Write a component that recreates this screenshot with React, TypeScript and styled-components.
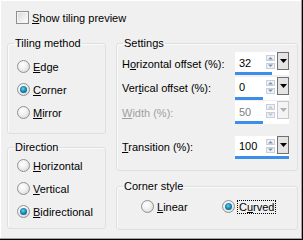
import React from "react";
import styled, { createGlobalStyle } from "styled-components";

const GlobalStyle = createGlobalStyle`
  html, body { margin: 0; padding: 0; background: #f0f0f0; }
  body { font-family: "Liberation Sans", Arial, sans-serif; font-size: 11px; color: #000; }
`;

const Dialog = styled.div`
  width: 303px;
  height: 240px;
  box-sizing: border-box;
  background: #f0f0f0;
  padding: 11px 5px 0 7px;
  box-shadow: inset -1px -1px 0 #000, inset -2px -2px 0 #a0a0a0, inset 1px 1px 0 #fff;
  display: flex;
  flex-direction: column;
`;

const Header = styled.div`
  padding-left: 9px;
  height: 13px;
  display: flex;
  align-items: center;
`;

const Columns = styled.div`
  margin-top: 13px;
  display: grid;
  grid-template-columns: 99px 1fr;
  column-gap: 10px;
  align-items: start;
`;

const Column = styled.div<{ $gap: number }>`
  display: flex;
  flex-direction: column;
  gap: ${(p) => p.$gap}px;
`;

const Group = styled.fieldset<{ $h: number; $pt: number }>`
  margin: 0;
  box-sizing: border-box;
  height: ${(p) => p.$h}px;
  padding: ${(p) => p.$pt}px 0 0 0;
  border: 1px solid #dde0e3;
  border-radius: 3px;
  box-shadow: inset 1px 1px 0 #fbfbfb;
  min-width: 0;
  overflow: hidden;
`;

const Legend = styled.legend`
  margin-left: 6px;
  padding: 0 1px;
  font-size: 11px;
  line-height: 13px;
`;

const Key = styled.span`
  text-decoration: underline;
  text-underline-offset: 1px;
`;

const Label = styled.span<{ $disabled?: boolean; $focus?: boolean }>`
  color: ${(p) => (p.$disabled ? "#a0a0a0" : "#000")};
  white-space: nowrap;
  ${(p) => (p.$focus ? "outline: 1px dotted #000; outline-offset: 0px; padding: 0 1px;" : "")}
`;

const RadioRow = styled.div`
  height: 23px;
  display: flex;
  align-items: center;
  gap: 3px;
  padding-left: 9px;
`;

const RadioCircle = styled.span<{ $checked?: boolean }>`
  width: 13px;
  height: 13px;
  box-sizing: border-box;
  border-radius: 50%;
  border: 1px solid #8f9293;
  background: radial-gradient(circle at 40% 35%, #ffffff 0%, #f2f2f2 40%, #d0d0d0 100%);
  display: flex;
  align-items: center;
  justify-content: center;
  flex-shrink: 0;
  &::after {
    content: "";
    display: ${(p) => (p.$checked ? "block" : "none")};
    width: 7px;
    height: 7px;
    border-radius: 50%;
    background: radial-gradient(circle at 45% 40%, #6fd0ec 0%, #1a8bb5 45%, #0b3f5a 100%);
  }
`;

const CheckBox = styled.span`
  width: 13px;
  height: 13px;
  box-sizing: border-box;
  border: 1px solid #8f8f8f;
  background: linear-gradient(135deg, #d8d8d8 0%, #f0f0f0 60%, #ffffff 100%);
  box-shadow: inset 0 0 0 1px #f4f4f4;
  margin-right: 3px;
`;

const SettingsRows = styled.div`
  display: flex;
  flex-direction: column;
  gap: 1.5px;
  padding: 0 8px 0 5px;
`;

const SettingRow = styled.div<{ $gap?: number }>`
  height: 23px;
  display: flex;
  align-items: center;
  justify-content: space-between;
  margin-top: ${(p) => p.$gap ?? 0}px;
`;

const Field = styled.div`
  position: relative;
  width: 54px;
  height: 23px;
  background: #fff;
  display: flex;
  align-items: center;
  box-sizing: border-box;
`;

const FieldValue = styled.span<{ $disabled?: boolean }>`
  flex: 1;
  padding-left: 4px;
  color: ${(p) => (p.$disabled ? "#808080" : "#000")};
  padding-bottom: 2px;
`;

const Spinner = styled.div`
  width: 9px;
  display: flex;
  flex-direction: column;
  gap: 2px;
  margin-right: 2px;
  padding-bottom: 3px;
`;

const SpinBtn = styled.svg`
  display: block;
`;

const DropBtn = styled.div<{ $disabled?: boolean }>`
  width: 12px;
  height: 18px;
  box-sizing: border-box;
  border: 1px solid ${(p) => (p.$disabled ? "#c8c8c8" : "#707070")};
  background: ${(p) => (p.$disabled ? "#f4f4f4" : "#e4e4e4")};
  display: flex;
  align-items: center;
  justify-content: center;
  align-self: flex-start;
`;

const Bar = styled.div`
  position: absolute;
  left: 0;
  bottom: 0;
  height: 3px;
  background: #3c8ee6;
`;

const CornerRow = styled.div`
  display: flex;
  align-items: center;
  padding-left: 24px;
`;

const CornerItem = styled.div<{ $w: number }>`
  width: ${(p) => p.$w}px;
  display: flex;
  align-items: center;
  gap: 3px;
  height: 23px;
`;

function Radio({ checked, children }: { checked?: boolean; children: React.ReactNode }) {
  return (
    <RadioRow>
      <RadioCircle $checked={checked} />
      <Label>{children}</Label>
    </RadioRow>
  );
}

function Spin({ value, bar, disabled }: { value: string; bar: number; disabled?: boolean }) {
  const arrow = disabled ? "#c0c0c0" : "#7a8ea8";
  return (
    <Field>
      <FieldValue $disabled={disabled}>{value}</FieldValue>
      <Spinner>
        <SpinBtn width="9" height="6" viewBox="0 0 9 6">
          <rect x="0.5" y="0.5" width="8" height="5" fill="#eef2f6" stroke="#c6d0da" />
          <path d="M2 4.5 L4.5 2 L7 4.5 Z" fill={arrow} />
        </SpinBtn>
        <SpinBtn width="9" height="6" viewBox="0 0 9 6">
          <rect x="0.5" y="0.5" width="8" height="5" fill="#eef2f6" stroke="#c6d0da" />
          <path d="M2 1.5 L4.5 4 L7 1.5 Z" fill={arrow} />
        </SpinBtn>
      </Spinner>
      <DropBtn $disabled={disabled}>
        <svg width="7" height="4" viewBox="0 0 7 4">
          <path d="M0 0 L7 0 L3.5 4 Z" fill={disabled ? "#b0b0b0" : "#000"} />
        </svg>
      </DropBtn>
      <Bar style={{ width: bar }} />
    </Field>
  );
}

export default function App() {
  return (
    <>
      <GlobalStyle />
      <Dialog>
        <Header>
          <CheckBox />
          <Label>
            <Key>S</Key>how tiling preview
          </Label>
        </Header>
        <Columns>
          <Column $gap={7}>
            <Group $h={97} $pt={5}>
              <Legend>Tiling method</Legend>
              <Radio>
                <Key>E</Key>dge
              </Radio>
              <Radio checked>
                <Key>C</Key>orner
              </Radio>
              <Radio>
                <Key>M</Key>irror
              </Radio>
            </Group>
            <Group $h={88} $pt={0}>
              <Legend>Direction</Legend>
              <Radio>
                <Key>H</Key>orizontal
              </Radio>
              <Radio>
                <Key>V</Key>ertical
              </Radio>
              <Radio checked>
                <Key>B</Key>idirectional
              </Radio>
            </Group>
          </Column>
          <Column $gap={9}>
            <Group $h={134} $pt={2}>
              <Legend>Settings</Legend>
              <SettingsRows>
                <SettingRow>
                  <Label>
                    H<Key>o</Key>rizontal offset (%):
                  </Label>
                  <Spin value="32" bar={37} />
                </SettingRow>
                <SettingRow>
                  <Label>
                    Ver<Key>t</Key>ical offset (%):
                  </Label>
                  <Spin value="0" bar={28} />
                </SettingRow>
                <SettingRow>
                  <Label $disabled>
                    <Key>W</Key>idth (%):
                  </Label>
                  <Spin value="50" bar={28} disabled />
                </SettingRow>
                <SettingRow $gap={10}>
                  <Label>
                    <Key>T</Key>ransition (%):
                  </Label>
                  <Spin value="100" bar={54} />
                </SettingRow>
              </SettingsRows>
            </Group>
            <Group $h={50} $pt={2}>
              <Legend>Corner style</Legend>
              <CornerRow>
                <CornerItem $w={81}>
                  <RadioCircle />
                  <Label>
                    <Key>L</Key>inear
                  </Label>
                </CornerItem>
                <CornerItem $w={70}>
                  <RadioCircle $checked />
                  <Label $focus>
                    C<Key>u</Key>rved
                  </Label>
                </CornerItem>
              </CornerRow>
            </Group>
          </Column>
        </Columns>
      </Dialog>
    </>
  );
}
